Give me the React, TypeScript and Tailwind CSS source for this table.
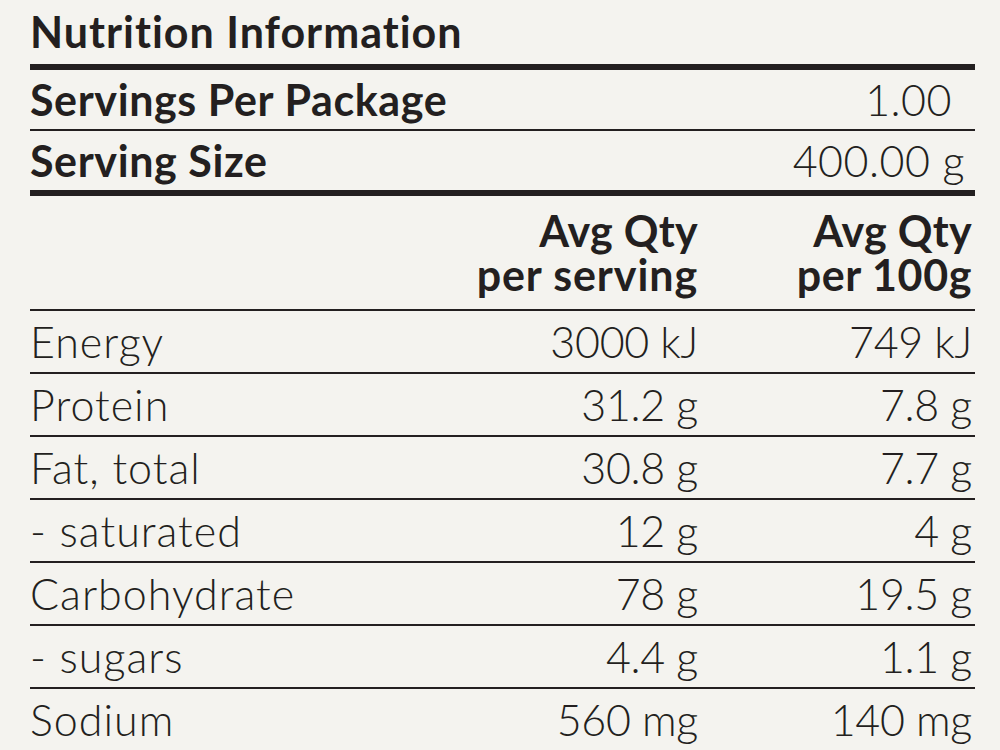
const rows: [string, string, string][] = [
  ["Energy", "3000 kJ", "749 kJ"],
  ["Protein", "31.2 g", "7.8 g"],
  ["Fat, total", "30.8 g", "7.7 g"],
  ["- saturated", "12 g", "4 g"],
  ["Carbohydrate", "78 g", "19.5 g"],
  ["- sugars", "4.4 g", "1.1 g"],
  ["Sodium", "560 mg", "140 mg"],
];

export default function App() {
  return (
    <div className="min-h-[750px] w-[1000px] overflow-hidden bg-[#f4f3ef] text-[#231f20] [font-family:Lato,'Noto_Sans',sans-serif] [font-variant-ligatures:none]">
      <div className="ml-[30px] w-[945px]">
        <h1 className="flex h-[64px] items-center pb-[2px] text-[43px] font-bold leading-none tracking-[1px]">
          Nutrition Information
        </h1>
        <div className="h-[6px] bg-[#231f20]" />
        <div className="flex h-[59px] items-center justify-between pr-[23px] text-[43px] leading-none">
          <span className="font-bold tracking-[0.6px]">Servings Per Package</span>
          <span className="font-light tracking-[0.5px]">1.00</span>
        </div>
        <div className="h-[2px] bg-[#231f20]" />
        <div className="flex h-[59px] items-center justify-between pr-[10px] text-[43px] leading-none">
          <span className="font-bold tracking-[0.6px]">Serving Size</span>
          <span className="font-light tracking-[0.5px]">400.00 g</span>
        </div>
        <div className="h-[6px] bg-[#231f20]" />
        <div className="grid h-[115px] grid-cols-[408px_260px_274px] items-center border-b-2 border-[#231f20] pr-[3px] text-right text-[43px] font-bold leading-[44px]">
          <span />
          <div>
            <div className="tracking-[0.3px]">Avg Qty</div>
            <div className="tracking-[0.9px]">per serving</div>
          </div>
          <div>
            <div className="tracking-[0.3px]">Avg Qty</div>
            <div className="tracking-[0.6px]">per 100g</div>
          </div>
        </div>
        {rows.map(([name, serving, per100]) => (
          <div
            key={name}
            className="grid h-[63px] grid-cols-[408px_260px_274px] items-center border-b-2 border-[#231f20] pr-[3px] text-[43px] font-light leading-none"
          >
            <span className="tracking-[1px]">{name}</span>
            <span className="text-right tracking-[-0.3px]">{serving}</span>
            <span className="text-right tracking-[-0.3px]">{per100}</span>
          </div>
        ))}
      </div>
    </div>
  );
}
